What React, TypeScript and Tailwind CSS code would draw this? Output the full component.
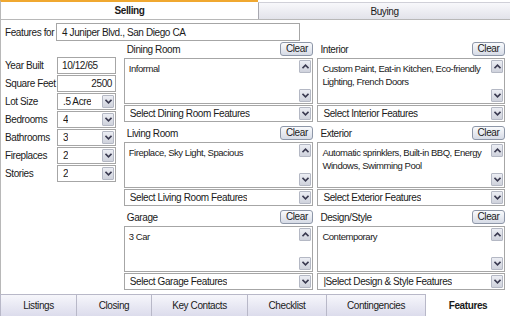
import React from "react";

const Chevron = ({ up = false }: { up?: boolean }) => (
    <svg width="7" height="5" viewBox="0 0 7 5" className={up ? "rotate-180" : ""}>
        <path d="M0.5 0.8 L3.5 3.8 L6.5 0.8" fill="none" stroke="#3a3a50" strokeWidth="1.6" />
    </svg>
);

const ArrowBox = ({ up = false }: { up?: boolean }) => (
    <div className="w-[12px] h-[13px] flex items-center justify-center bg-gradient-to-b from-[#eceef4] to-[#cfd2dc] border border-[#b4b8c4] rounded-[1px]">
        <Chevron up={up} />
    </div>
);

const Select = ({ value, w = "w-full" }: { value: string; w?: string }) => (
    <div className={`${w} h-[17px] flex items-center justify-between border border-[#a6a6a6] bg-white pl-[5px] pr-[1px]`}>
        <span className="truncate">{value}</span>
        <ArrowBox />
    </div>
);

const ClearBtn = () => (
    <button className="h-[14px] w-[33px] flex items-center justify-center rounded-[3px] border border-[#8e97a8] bg-gradient-to-b from-[#fafbfd] to-[#d6dbe6] text-[#222] leading-none">
        Clear
    </button>
);

const Section = ({ title, text, select }: { title: string; text: string; select: string }) => (
    <div className="flex flex-col h-[84px]">
        <div className="h-[14px] flex items-center justify-between pl-[3px]">
            <span>{title}</span>
            <ClearBtn />
        </div>
        <div className="mt-[2px] h-[46px] flex border border-[#a6a6a6] bg-white">
            <div className="flex-1 pl-[4px] pr-[1px] pt-[3px] leading-[13px] text-[9.5px] tracking-[-0.45px]">{text}</div>
            <div className="w-[13px] flex flex-col justify-between pr-[1px] py-[1px]">
                <ArrowBox up />
                <ArrowBox />
            </div>
        </div>
        <div className="mt-[1px]">
            <Select value={select} />
        </div>
    </div>
);

const Field = ({ label, children }: { label: string; children: React.ReactNode }) => (
    <div className="h-[18px] flex items-center">
        <span className="w-[52px] shrink-0 whitespace-nowrap">{label}</span>
        {children}
    </div>
);

export default function App() {
    const tabs = ["Listings", "Closing", "Key Contacts", "Checklist", "Contingencies"];
    const widths = ["w-[76px]", "w-[75px]", "w-[96px]", "w-[79px]", "w-[99px]"];

    return (
        <div className="w-[510px] h-[316px] bg-white flex flex-col text-[10px] tracking-[-0.4px] text-[#1a1a1a] font-['Liberation_Sans','DejaVu_Sans',sans-serif] overflow-hidden">
            {/* Top tabs */}
            <div className="h-[21px] flex border-b border-[#b8b8b8]">
                <div className="w-[258px] bg-white border-t-2 border-[#f0a830] border-l border-l-[#b8b8b8] flex items-center justify-center font-bold">
                    Selling
                </div>
                <div className="flex-1 mt-[2px] bg-gradient-to-b from-[#f8f8fb] to-[#e2e3ea] border-l border-[#a8a8b0] border-t border-t-[#d0d0d8] flex items-center justify-center">
                    Buying
                </div>
            </div>

            {/* Body */}
            <div className="flex-1 flex flex-col border-l border-[#b8b8b8] pl-[4px] pr-[5px]">
                <div className="mt-[3px] h-[18px] flex items-center">
                    <span className="w-[51px] whitespace-nowrap">Features for</span>
                    <div className="w-[244px] h-[18px] border border-[#a6a6a6] flex items-center pl-[5px]">
                        4 Juniper Blvd., San Diego CA
                    </div>
                </div>

                <div className="mt-[1px] flex">
                    {/* Left fields */}
                    <div className="w-[115px] pt-[14px] flex flex-col">
                        <Field label="Year Built">
                            <div className="w-[59px] h-[17px] border border-[#a6a6a6] pl-[4px] flex items-center">10/12/65</div>
                        </Field>
                        <Field label="Square Feet">
                            <div className="w-[59px] h-[17px] border border-[#a6a6a6] pr-[3px] flex items-center justify-end">2500</div>
                        </Field>
                        <Field label="Lot Size"><Select value=".5 Acre" w="w-[59px]" /></Field>
                        <Field label="Bedrooms"><Select value="4" w="w-[59px]" /></Field>
                        <Field label="Bathrooms"><Select value="3" w="w-[59px]" /></Field>
                        <Field label="Fireplaces"><Select value="2" w="w-[59px]" /></Field>
                        <Field label="Stories"><Select value="2" w="w-[59px]" /></Field>
                    </div>

                    {/* Middle */}
                    <div className="w-[190px] ml-[4px] flex flex-col">
                        <Section title="Dining Room" text="Informal" select="Select Dining Room Features" />
                        <Section title="Living Room" text="Fireplace, Sky Light, Spacious" select="Select Living Room Features" />
                        <Section title="Garage" text="3 Car" select="Select Garage Features" />
                    </div>

                    {/* Right */}
                    <div className="w-[188px] ml-[4px] flex flex-col">
                        <Section title="Interior" text="Custom Paint, Eat-in Kitchen, Eco-friendly Lighting, French Doors" select="Select Interior Features" />
                        <Section title="Exterior" text="Automatic sprinklers, Built-in BBQ, Energy Windows, Swimming Pool" select="Select Exterior Features" />
                        <Section title="Design/Style" text="Contemporary" select="|Select Design & Style Features" />
                    </div>
                </div>
            </div>

            {/* Bottom tabs */}
            <div className="h-[23px] flex border-t border-[#b8b8c8]">
                {tabs.map((t, i) => (
                    <div
                        key={t}
                        className={`${widths[i]} flex items-center justify-center bg-gradient-to-b from-[#f6f6fb] to-[#dcdcec] border-l border-[#b8b8c8]`}
                    >
                        {t}
                    </div>
                ))}
                <div className="flex-1 flex items-center justify-center bg-white font-bold border-l border-[#b8b8c8] -mt-[1px]">
                    Features
                </div>
            </div>
        </div>
    );
}
